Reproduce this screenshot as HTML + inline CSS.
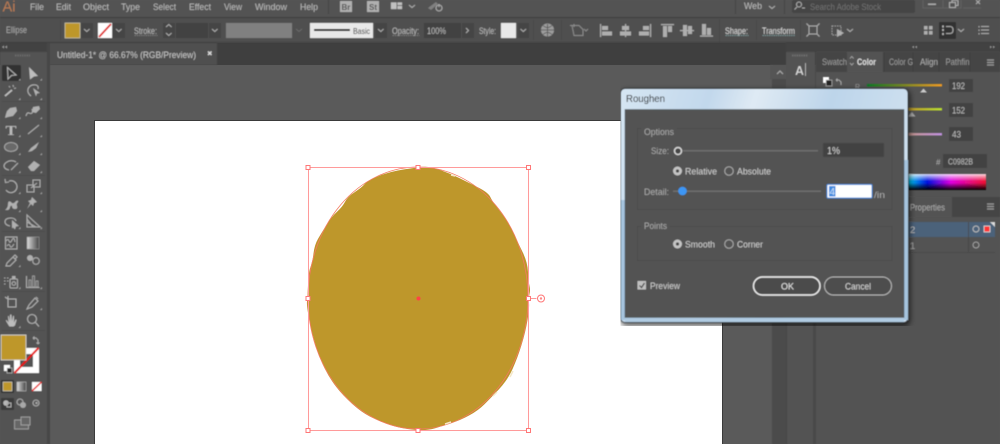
<!DOCTYPE html>
<html><head><meta charset="utf-8"><style>
html,body{margin:0;padding:0;width:1000px;height:444px;overflow:hidden;background:#535353}
svg{display:block}
text{font-family:"Liberation Sans",sans-serif;font-size:9.5px;fill:#bcbcbc}
.d{fill:#ababab;font-size:9.5px}
.i{fill:none;stroke:#ababab;stroke-width:1.1}
.f{fill:#b0b0b0;stroke:none}
.c{fill:none;stroke:#b0b0b0;stroke-width:1.1}
.s{fill:#444}
.h{fill:#fff;stroke:#f77;stroke-width:1}
</style></head><body>
<svg width="1000" height="444" viewBox="0 0 1000 444" xmlns="http://www.w3.org/2000/svg">
<defs>
<filter id="b" x="0" y="0" width="100%" height="100%"><feGaussianBlur stdDeviation="0.4"/></filter>
<filter id="sh" x="-10%" y="-10%" width="120%" height="120%"><feGaussianBlur stdDeviation="3"/></filter>
<linearGradient id="glass" x1="0" y1="0" x2="1" y2="0.25"><stop offset="0" stop-color="#d6e6f3"/><stop offset=".3" stop-color="#c2d8ec"/><stop offset=".45" stop-color="#dfeaf4"/><stop offset=".7" stop-color="#bdd5ea"/><stop offset="1" stop-color="#cfe1f0"/></linearGradient>
<linearGradient id="r" x1="0" x2="1"><stop offset="0" stop-color="#0c7a22"/><stop offset="1" stop-color="#f09a20"/></linearGradient>
<linearGradient id="g" x1="0" x2="1"><stop offset="0" stop-color="#c03c20"/><stop offset="1" stop-color="#b8e030"/></linearGradient>
<linearGradient id="bb" x1="0" x2="1"><stop offset="0" stop-color="#c09820"/><stop offset="1" stop-color="#c090e0"/></linearGradient>
<linearGradient id="spec" x1="0" x2="1"><stop offset="0" stop-color="#00d0f0"/><stop offset=".25" stop-color="#0010e0"/><stop offset=".55" stop-color="#e000e0"/><stop offset="1" stop-color="#f01030"/></linearGradient>
<linearGradient id="fade" x1="0" x2="0" y1="0" y2="1"><stop offset="0" stop-color="#fff" stop-opacity=".85"/><stop offset=".45" stop-color="#fff" stop-opacity="0"/><stop offset=".55" stop-color="#000" stop-opacity="0"/><stop offset="1" stop-color="#000"/></linearGradient>
<linearGradient id="gr" x1="0" x2="1"><stop offset="0" stop-color="#ddd"/><stop offset="1" stop-color="#444"/></linearGradient>
</defs>

<rect width="1000" height="444" fill="#535353"/>
<rect y="43" width="1000" height="22" fill="#3f3f3f"/>
<rect y="65" x="50" width="723" height="379" fill="#5a5a5a"/>
<rect x="95" y="121" width="627" height="323" fill="#fff"/>
<rect x="94" y="120" width="629" height="1" fill="#3a3a3a"/>
<rect x="94" y="120" width="1" height="324" fill="#3a3a3a"/>
<rect x="722" y="120" width="1" height="324" fill="#3a3a3a"/>

<g filter="url(#b)">
<rect x="772" y="65" width="14" height="379" fill="#4b4b4b"/>
<rect x="770" y="65" width="16" height="14" fill="#555"/>
<rect x="786" y="65" width="1.500" height="379" fill="#474747"/>
<rect x="787" y="65" width="27" height="379" fill="#525252"/>
<rect x="813" y="65" width="3" height="379" fill="#4a4a4a"/>
<rect x="816" y="52" width="184" height="392" fill="#535353"/>
<rect x="786" y="52" width="29" height="60" fill="#535353"/>
<rect x="786" y="43" width="214" height="9" fill="#434343"/>
<path d="M777 74l3-3 3 3" class="i"/>

<rect width="1000" height="17" fill="#535353"/>
<rect y="17" width="1000" height="1" fill="#3e3e3e"/>
<text x="2.500" y="11.500" style="font-size:15px;fill:#b97c52" textLength="13" lengthAdjust="spacingAndGlyphs">Ai</text>
<text x="30" y="10" textLength="14" lengthAdjust="spacingAndGlyphs">File</text>
<text x="56" y="10" textLength="15" lengthAdjust="spacingAndGlyphs">Edit</text>
<text x="83" y="10" textLength="26" lengthAdjust="spacingAndGlyphs">Object</text>
<text x="121" y="10" textLength="19" lengthAdjust="spacingAndGlyphs">Type</text>
<text x="153" y="10" textLength="23" lengthAdjust="spacingAndGlyphs">Select</text>
<text x="189" y="10" textLength="22" lengthAdjust="spacingAndGlyphs">Effect</text>
<text x="224" y="10" textLength="18" lengthAdjust="spacingAndGlyphs">View</text>
<text x="255" y="10" textLength="32" lengthAdjust="spacingAndGlyphs">Window</text>
<text x="300" y="10" textLength="18" lengthAdjust="spacingAndGlyphs">Help</text>
<rect x="328" y="0" width="1" height="14" fill="#464646"/>
<rect x="340" y="1" width="12" height="11" fill="#b0b0b0"/><text x="341.500" y="10" style="font-size:8px;fill:#555;font-weight:bold">Br</text>
<rect x="367" y="1" width="12" height="11" fill="#b0b0b0"/><text x="369" y="10" style="font-size:8px;fill:#555;font-weight:bold">St</text>
<path d="M390.500 2h12v7.500h-12zM397 2v7.500M397 5.500h6" fill="#c0c0c0" stroke="#535353" stroke-width=".8"/>
<path d="M409 5l3 2.500 3-2.500" class="i"/>
<path d="M428 8l8-6 2 2-7 6z" fill="#808080"/><circle cx="439" cy="8" r="3" class="i"/><path d="M439 4v3" class="i"/>
<rect x="735" y="0" width="1" height="14" fill="#464646"/><rect x="784" y="0" width="1" height="14" fill="#464646"/>
<text x="744" y="9" textLength="18" lengthAdjust="spacingAndGlyphs">Web</text>
<path d="M769 6l3 2.500 3-2.500" class="i"/>
<rect x="792" y="0" width="123" height="13" rx="2" fill="#444"/>
<circle cx="799" cy="4.500" r="2.500" class="i"/><path d="M797 7l-2.500 2.500M802 8h3" class="i"/>
<text x="810" y="10" style="fill:#727272" textLength="71" lengthAdjust="spacingAndGlyphs">Search Adobe Stock</text>
<path d="M923 0v8h20V0M943 8h18V0M963 8h18" fill="none" stroke="#666" stroke-width=".8"/>
<rect x="928" y="3.500" width="8" height="1.500" fill="#aaa"/>
<path d="M949.500 2.500h6v5h-6zM952 2.500v-2h6v5h-2.500" class="i" stroke-width=".9"/>
<path d="M976 0l4 4m0-4l-4 4" class="i"/>

<rect y="18" width="1000" height="25" fill="#505050"/>
<rect y="42" width="1000" height="1" fill="#3e3e3e"/>
<text x="6" y="33" class="d" textLength="21" lengthAdjust="spacingAndGlyphs">Ellipse</text>
<rect x="60" y="20" width="1" height="20" fill="#464646"/>
<rect x="65" y="23" width="15" height="15" fill="#be972b" stroke="#d8d8c8" stroke-width=".6"/>
<rect x="81" y="23" width="12" height="15" class="s"/><path d="M84 29l2.800 2.500 2.800-2.500" class="i"/>
<rect x="98" y="23" width="14" height="15" fill="#fff"/><path d="M99 37l12-13" stroke="#e01818" stroke-width="1.800"/>
<rect x="113" y="23" width="12" height="15" class="s"/><path d="M116 29l2.800 2.500 2.800-2.500" class="i"/>
<text x="134" y="34" textLength="23" lengthAdjust="spacingAndGlyphs">Stroke:</text><path d="M134.500 35.500h23" stroke="#888" stroke-width=".7" stroke-dasharray="1.500 .7"/>
<rect x="163" y="23" width="12" height="15" class="s"/><path d="M166 27l2.800-2.500 2.800 2.500M166 33l2.800 2.500 2.800-2.500" class="i"/>
<rect x="176" y="23" width="32" height="15" fill="#434343"/>
<rect x="209" y="23" width="12" height="15" class="s"/><path d="M212 29l2.800 2.500 2.800-2.500" class="i"/>
<rect x="226" y="23" width="66" height="15" fill="#808080"/>
<path d="M296 29l3 2.500 3-2.500" stroke="#6a6a6a" fill="none"/>
<rect x="310" y="23" width="63" height="15" fill="#e8e8e8"/><rect x="314" y="29" width="36" height="2" fill="#000"/>
<text x="353" y="34" style="fill:#222;font-size:8.500px" textLength="17" lengthAdjust="spacingAndGlyphs">Basic</text>
<rect x="375" y="23" width="12" height="15" class="s"/><path d="M378 29l2.800 2.500 2.800-2.500" class="i"/>
<text x="392" y="34" textLength="27" lengthAdjust="spacingAndGlyphs">Opacity:</text><path d="M392.500 35.500h27" stroke="#888" stroke-width=".7" stroke-dasharray="1.500 .7"/>
<rect x="424" y="23" width="37" height="15" fill="#434343"/><text x="427" y="34" textLength="19" lengthAdjust="spacingAndGlyphs">100%</text>
<rect x="462" y="23" width="12" height="15" class="s"/><path d="M466 28l2.500 2.500-2.500 2.500" class="i"/>
<text x="479" y="34" textLength="17" lengthAdjust="spacingAndGlyphs">Style:</text>
<rect x="501" y="23" width="15" height="15" fill="#e8e8e8"/>
<rect x="518" y="23" width="11" height="15" class="s"/><path d="M520.500 29l2.800 2.500 2.800-2.500" class="i"/>
<rect x="533" y="20" width="1" height="20" fill="#464646"/>
<circle cx="547.500" cy="30" r="6.500" fill="#9c9c9c"/><path d="M541 30h13M547.500 24v13M543 25.500q4.500 4 9 0M543 34.500q4.500-4 9 0" stroke="#535353" stroke-width=".8" fill="none"/>
<rect x="561" y="20" width="1" height="20" fill="#464646"/>
<path d="M572 25.500h7l4 4v6h-9zM570 25.500h3M574 24v3" fill="none" stroke="#8c8c8c" stroke-width="1"/><path d="M584 29l2 2 2-2" fill="none" stroke="#8c8c8c"/>
<g fill="#aeaeae">
<rect x="600" y="24" width="1.200" height="13"/><rect x="602" y="26" width="6" height="4"/><rect x="602" y="31.500" width="10" height="4"/>
<rect x="625" y="24" width="1.200" height="13"/><rect x="622" y="26" width="7" height="4"/><rect x="620" y="31.500" width="11" height="4"/>
<rect x="650" y="24" width="1.200" height="13"/><rect x="643" y="26" width="6" height="4"/><rect x="639" y="31.500" width="10" height="4"/>
<rect x="661" y="24" width="13" height="1.200"/><rect x="663" y="26" width="4" height="11"/><rect x="668" y="26" width="4" height="6"/>
<rect x="680" y="30" width="14" height="1.200"/><rect x="683" y="25" width="4" height="11"/><rect x="688" y="26" width="4" height="8"/>
<rect x="700" y="35.500" width="13" height="1.200"/><rect x="702" y="24" width="4" height="11"/><rect x="707" y="28" width="4" height="7"/>
</g>
<rect x="719" y="19" width="1" height="23" fill="#464646"/>
<text x="725" y="34" textLength="23" lengthAdjust="spacingAndGlyphs" style="fill:#dcdcdc">Shape:</text><path d="M725.500 35.500h23" stroke="#8aa" stroke-width=".7" stroke-dasharray="1.500 .7"/>
<rect x="756" y="20" width="1" height="20" fill="#464646"/>
<text x="762" y="34" textLength="33" lengthAdjust="spacingAndGlyphs" style="fill:#dcdcdc">Transform</text><path d="M762.500 35.500h33" stroke="#8aa" stroke-width=".7" stroke-dasharray="1.500 .7"/>
<rect x="800" y="20" width="1" height="20" fill="#464646"/>
<path d="M809 26h8v8h-8z" fill="none" stroke="#aaa"/><path d="M809 26l-2.500-2.500M817 26l2.500-2.500M809 34l-2.500 2.500M817 34l2.500 2.500" class="i"/>
<path d="M832 26h9v9h-9z" fill="none" stroke="#999" stroke-dasharray="1.500 1"/><path d="M837 29l7 4-7 4z" class="f"/><path d="M847 29l3 2.500 3-2.500" class="i"/>
<g fill="#aeaeae"><rect x="924" y="26" width="3.500" height="3.500"/><rect x="929" y="26" width="3.500" height="3.500"/><rect x="924" y="31" width="3.500" height="3.500"/><rect x="929" y="31" width="3.500" height="3.500"/></g>
<rect x="939" y="22" width="17" height="17" rx="1" fill="#303030"/>
<path d="M943 25.500v2M943 29v2M943 33v2" stroke="#c0c0c0" stroke-width="1.600"/><path d="M946 26.500h4q3 0 3 3.500t-3 3.500h-4" class="i"/>
<path d="M958 29l3 2.500 3-2.500" class="i"/>
<path d="M979 26v1.500M979 29.500v1.500M979 33v1.500" stroke="#aaa"/><path d="M981 26.500h8M981 30h8M981 33.500h8" stroke="#aaa"/>

<rect x="50" y="43" width="167" height="22" fill="#505050"/>
<text x="57" y="58" style="fill:#c8c8c8" textLength="139" lengthAdjust="spacingAndGlyphs">Untitled-1* @ 66.67% (RGB/Preview)</text>
<path d="M208 51.500l3.500 3.500m0-3.500l-3.500 3.500" stroke="#ddd" stroke-width="1.300"/>

<!-- tools -->
<rect x="0" y="43" width="47" height="9" fill="#434343"/>
<path d="M2 47l2-1.500v3zM5 47l2-1.500v3z" fill="#999"/>
<rect x="0" y="52" width="47" height="392" fill="#535353"/>
<rect x="47" y="52" width="1" height="392" fill="#3e3e3e"/>
<rect x="47" y="43" width="3" height="401" fill="#474747"/>
<path d="M15 55.500h15" stroke="#6a6a6a" stroke-dasharray="1.500 .8" stroke-width="2"/>
<rect x="2" y="65" width="19" height="16" rx="1.500" fill="#333"/>
<path d="M7.500 67.500l8.500 7.500-4.500.5-3.500 3.500z" class="c"/>
<path d="M29 67l9 9-4 .5-4 3z" fill="#bdbdbd"/>
<path d="M5 96l7-6" stroke="#c0c0c0" stroke-width="1.800"/><path d="M13 85l.5 2M16 88l-2 .5M9 86l1 1.500" class="i" stroke-width=".9"/>
<path d="M31 96q-4-3-3-7 2-5 8-4 3 1 2 4" class="c"/><path d="M33 88l7 5-3 .5-1 3z" class="f"/>
<path d="M10 108l6-1 1 4-4 5-5 1-3 1 1-4 1-3z" class="f"/>
<path d="M26 116q1-4 3-3t3 0 0-4" class="c"/><path d="M33 107l6-1 1 3-4 4-4-1z" class="f"/>
<text x="5.500" y="135" style="font-family:'Liberation Serif',serif;font-size:14px;font-weight:bold;fill:#bcbcbc" textLength="11" lengthAdjust="spacingAndGlyphs">T</text>
<path d="M28 134l11-9" class="c"/>
<ellipse cx="11" cy="147" rx="6.500" ry="4.500" fill="#696969" stroke="#a8a8a8" stroke-width="1"/>
<path d="M28 152l3-4 8-6-3 6-4 3z" class="f"/>
<path d="M16 162q-3-2-7-1-5 2-5 5t5 4" class="c"/><path d="M11 170l7-7" class="c" stroke-width="1.800"/>
<path d="M28 167l6-6 6 4-6 6-3 0z" class="f"/>
<path d="M9 181a6 6 0 1 1-3 9" class="c"/><path d="M5 179l.5 3.500 3.500-.5" class="i"/>
<path d="M27 185h7v7h-7zM33 180h7v7h-7z" class="i"/><path d="M31 188l6-5" class="i"/>
<path d="M5 210q3-2 3-6t3-2q2 3 5-1 3-1 2 1-2 2-1 4 1 3-2 3-3 0-3-3-1-1-2 1 0 2-2 3z" class="f"/>
<path d="M32 197l5 5-3 1-1 3-2-2-4 5 3-6-2-2 3-1z" class="f"/>
<path d="M5 222q0-4 6-4 4 0 5 3M5 222q0 3 5 4" class="c"/><path d="M12 220l7 6-3 .5-1 3-2-2-1 1z" class="f"/>
<path d="M27 215v12h13zM27 219l6 8M27 222l9 5" class="i" stroke-width=".8"/>
<rect x="5.500" y="237" width="11.500" height="12" class="i"/><path d="M6 241q2-3 3 0t3-1 3 2M7 246q2-3 3 0t4-2" class="i" stroke-width=".8"/>
<rect x="27" y="237" width="12" height="12" fill="url(#gr)" stroke="#999" stroke-width=".6"/>
<path d="M6 266l1-3 6-6 3 3-6 6zM13 257l2-2 2 2-2 2" class="c"/>
<circle cx="30" cy="258" r="3" class="f"/><circle cx="36" cy="261" r="3.300" class="i"/>
<path d="M4 278h1.500M7 278h1.500M4 281h1.500M7 281h1.500M4 284h1.500" stroke="#a8a8a8"/>
<rect x="10" y="279" width="7.500" height="9" rx="1" class="i"/><rect x="12" y="276" width="3.500" height="2.500" class="f"/><circle cx="13.800" cy="283.500" r="1.800" class="i"/>
<path d="M26.500 276v11.500h13" class="i"/><rect x="29" y="280" width="2" height="7" fill="none" stroke="#a8a8a8" stroke-width=".8"/><rect x="32.500" y="276" width="2" height="11" fill="none" stroke="#a8a8a8" stroke-width=".8"/><rect x="36" y="281" width="2" height="6" fill="none" stroke="#a8a8a8" stroke-width=".8"/>
<path d="M8 299h8v8h-8zM5 297l3 2M8 296v3" class="c"/>
<path d="M27 309l2-4 6-7 3 3-6 6z" class="c"/><path d="M36 297l2 2" class="i"/>
<path d="M9 326l-3-5q-.5-2 1.500 0l1 1.500-.5-6q0-1.500 1 0l1 4.500 0-6q1-1.500 1.500 0l.5 6 1-5q1-1 1 .5v6l1.500-3q1-.5 1 1l-1.500 5-1.500 1h-4z" fill="#bcbcbc"/>
<circle cx="32" cy="319" r="4.500" class="c"/><path d="M35.500 322.500l3.500 4" class="c" stroke-width="1.500"/>
<g fill="#a0a0a0"><path d="M20.500 80.500v-2l-2 2zM42 80.500v-2l-2 2zM20.500 100v-2l-2 2zM42 100v-2l-2 2zM20.500 119v-2l-2 2zM42 119v-2l-2 2zM20.500 137v-2l-2 2zM42 137v-2l-2 2zM20.500 155v-2l-2 2zM42 155v-2l-2 2zM20.500 173v-2l-2 2zM42 173v-2l-2 2zM20.500 194v-2l-2 2zM42 194v-2l-2 2zM20.500 212v-2l-2 2zM42 212v-2l-2 2zM20.500 229v-2l-2 2zM42 229v-2l-2 2zM20.500 267v-2l-2 2zM20.500 289v-2l-2 2zM42 289v-2l-2 2zM42 310v-2l-2 2zM20.500 328v-2l-2 2z"/></g>
<rect x="2" y="101" width="43" height=".8" fill="#4c4c4c"/><rect x="2" y="175" width="43" height=".8" fill="#4c4c4c"/><rect x="2" y="231" width="43" height=".8" fill="#4c4c4c"/><rect x="2" y="291" width="43" height=".8" fill="#4c4c4c"/><rect x="2" y="330" width="43" height=".8" fill="#4c4c4c"/>
<rect x="14" y="348" width="25" height="25" fill="#fff"/>
<rect x="20" y="354" width="13" height="13" fill="#535353"/>
<path d="M14.500 373l24-25" stroke="#e81818" stroke-width="2"/>
<rect x="1" y="335" width="25" height="25" fill="#be972b" stroke="#ddd" stroke-width=".8"/>
<path d="M33 338h3l2 2v4M33 338l1.500-1.500M33 338l1.500 1.500M38 344l-1.500-1.500M38 344l1.500-1.500" class="i" stroke-width="1"/>
<rect x="4" y="365" width="6" height="6" fill="#fff"/><rect x="7" y="368" width="5" height="5" fill="#222" stroke="#ddd" stroke-width=".6"/>
<rect x="1" y="380" width="13" height="13" rx="1" fill="#333"/>
<rect x="3" y="382" width="9" height="9" fill="#be972b" stroke="#ddd" stroke-width=".6"/>
<rect x="17" y="382" width="9" height="9" fill="url(#gr)" stroke="#bbb" stroke-width=".6"/>
<rect x="32" y="382" width="9.500" height="9" fill="#fff"/><path d="M32 391l9.500-9" stroke="#e81818" stroke-width="1.500"/>
<rect x="1" y="398" width="13" height="12" rx="1" fill="#3a3a3a"/>
<circle cx="6" cy="403" r="2.800" fill="#b8b8b8"/><rect x="7" y="403" width="4" height="4" class="i" stroke-width=".8"/>
<circle cx="20" cy="402" r="3" class="i" stroke-width=".8"/><circle cx="23" cy="405" r="3" fill="#a8a8a8"/>
<circle cx="36" cy="403" r="3" class="i" stroke-width=".8"/><rect x="35.500" y="402" width="2" height="2" fill="#a8a8a8"/>
<rect x="14.500" y="420" width="14" height="9" fill="#666" stroke="#aaa" stroke-width=".8"/><rect x="21" y="417" width="9" height="8" fill="#666" stroke="#aaa" stroke-width=".8"/>
</g>

<!-- artwork -->
<path d="M405 169.700Q420 167.500 425 167.200Q430 167 440 170.500Q450 174 459 178.500Q468 183 478 188Q488 193 490 197.500Q492 202 500 212Q508 222 512.500 232Q517 242 522 252Q527 262 527.500 272Q528 282 529 286Q530 290 529 294Q528 298 528.500 303Q529 308 527 320Q525 332 521 345Q517 358 512 369Q507 380 498.500 389Q490 398 484 404Q478 410 469 415Q460 420 451.500 422.500Q443 425 437.500 427Q432 429 425 429.500Q418 430 407.500 428.500Q397 427 387.500 423.500Q378 420 370 416Q362 412 352.500 403.500Q343 395 336.500 386.500Q330 378 325 368Q320 358 316 345Q312 332 309.500 318.500Q307 305 307.500 301.500Q308 298 308.500 285Q309 272 311 267Q313 262 314 253.500Q315 245 318.500 239Q322 233 327 225Q332 217 337.500 212Q343 207 345.500 202Q348 197 355 192.500Q362 188 365 184.500Q368 181 379 176.500Q390 172 405 169.700Z" fill="#be972b" stroke="#be972b" stroke-width="1"/>
<ellipse cx="418" cy="298" rx="110" ry="131" fill="none" stroke="#f47a60" stroke-width=".8"/>
<path d="M451 175l4 1M510 377l3-6M493 396l4-4M445 424l6-2" stroke="#f4e8c8" stroke-width="1.500" fill="none"/>
<path d="M308.500 167.500h220v263h-220z" fill="none" stroke="#ff9a9a" stroke-width="1"/>
<path d="M528.500 298.500h8" stroke="#ff9a9a"/>
<circle cx="541" cy="298.500" r="3.500" fill="#fff" stroke="#f77"/><circle cx="541" cy="298.500" r="1.200" fill="#f88"/>
<rect x="306" y="165.500" width="4" height="4" class="h"/><rect x="416" y="165.500" width="4" height="4" class="h"/><rect x="526.500" y="165.500" width="4" height="4" class="h"/>
<rect x="306" y="296.500" width="4" height="4" class="h"/><rect x="526.500" y="296.500" width="4" height="4" class="h"/>
<rect x="306" y="428.500" width="4" height="4" class="h"/><rect x="416" y="428.500" width="4" height="4" class="h"/><rect x="526.500" y="428.500" width="4" height="4" class="h"/>
<circle cx="418.500" cy="298.500" r="2" fill="#f44"/>

<g filter="url(#b)">
<path d="M912 47l2-1.500v3zM915 47l2-1.500v3zM990 45.500l2 1.500-2 1.500zM993 45.500l2 1.500-2 1.500z" fill="#999"/>
<path d="M792 55.500h16" stroke="#707070" stroke-width="2" stroke-dasharray="1.500 .8"/>
<text x="795" y="75" style="font-size:13px;fill:#d4d4d4;font-weight:bold" textLength="9" lengthAdjust="spacingAndGlyphs">A</text><rect x="805" y="63" width="1" height="13" fill="#bbb"/>
<rect x="816" y="52" width="184" height="20" fill="#454545"/>
<rect x="847" y="52" width="36" height="20" fill="#535353"/>
<text x="822" y="65" style="fill:#9c9c9c" textLength="25" lengthAdjust="spacingAndGlyphs">Swatch</text>
<path d="M850 58.500l1.800-2 1.800 2M850 63l1.800 2 1.800-2" fill="none" stroke="#aaa" stroke-width=".8"/>
<text x="857" y="65" style="fill:#e0e0e0;font-weight:bold" textLength="19" lengthAdjust="spacingAndGlyphs">Color</text>
<text x="889" y="65" style="fill:#9c9c9c" textLength="24" lengthAdjust="spacingAndGlyphs">Color G</text>
<text x="920" y="65" style="fill:#aeaeae" textLength="18" lengthAdjust="spacingAndGlyphs">Align</text>
<text x="945.500" y="65" style="fill:#9c9c9c" textLength="24" lengthAdjust="spacingAndGlyphs">Pathfin</text>
<path d="M884 52v20M913 52v20M939 52v20M970 52v20" stroke="#3f3f3f" stroke-width=".7"/>
<path d="M987 60h7M987 62.500h7M987 65h7" stroke="#999" stroke-width="1.200"/>
<rect x="823" y="77" width="6" height="6" fill="#fff"/><rect x="826" y="80" width="6" height="6" fill="#222" stroke="#ccc" stroke-width=".6"/>
<path d="M836 80h3l2 2v3M836 80l1.500-1.500M836 80l1.500 1.500" class="i" stroke-width=".8"/>
<text x="855" y="89" style="font-size:7px;fill:#999">R</text>
<rect x="867" y="84" width="75" height="2.500" fill="url(#r)"/><path d="M920 92.500l3.500-4 3.500 4z" fill="#ccc"/>
<rect x="949" y="79" width="24" height="13" rx="1" fill="#434343"/><text x="952" y="89" textLength="13" lengthAdjust="spacingAndGlyphs">192</text>
<rect x="867" y="108" width="75" height="2.500" fill="url(#g)"/><path d="M908 116.500l4-4.500 3.500 4.500z" fill="#aaa"/>
<rect x="949" y="103" width="24" height="14" rx="1" fill="#434343"/><text x="952" y="113.500" textLength="13" lengthAdjust="spacingAndGlyphs">152</text>
<rect x="867" y="133" width="75" height="2.500" fill="url(#bb)"/>
<rect x="949" y="127" width="24" height="14" rx="1" fill="#434343"/><text x="952" y="137.500" textLength="9" lengthAdjust="spacingAndGlyphs">43</text>
<text x="936" y="165" style="fill:#bbb;font-size:8px">#</text>
<rect x="943" y="154" width="44" height="14" rx="1" fill="#434343"/><text x="948" y="164.500" style="font-size:8.500px" textLength="25" lengthAdjust="spacingAndGlyphs">C0982B</text>
<rect x="908" y="174" width="78" height="16" fill="url(#spec)"/><rect x="908" y="174" width="78" height="16" fill="url(#fade)"/>
<rect x="816" y="197" width="184" height="20" fill="#454545"/>
<rect x="905" y="197" width="47" height="20" fill="#535353"/>
<text x="910" y="210.500" style="fill:#aeaeae" textLength="35" lengthAdjust="spacingAndGlyphs">Properties</text>
<path d="M987 204h7M987 206.500h7M987 209h7" stroke="#999" stroke-width="1.200"/>
<rect x="816" y="222" width="179" height="15" fill="#4c627a"/>
<path d="M990 222h5v5z" fill="#ddd"/>
<text x="910" y="233" style="fill:#c0c0c0">2</text>
<text x="910" y="249" style="fill:#aeaeae">1</text>
<circle cx="976" cy="229" r="3" fill="none" stroke="#bbb"/><rect x="984" y="226" width="6" height="6" fill="#f33" stroke="#ddd" stroke-width=".8"/>
<circle cx="976" cy="245" r="3" fill="none" stroke="#aaa"/>
<path d="M968.500 222v30M816 252.500h179" stroke="#474747" stroke-width=".8"/>

<!-- dialog -->
<rect x="621" y="90" width="289" height="236" rx="5" fill="#000" opacity=".65" filter="url(#sh)"/>
<rect x="620.500" y="88.500" width="287.500" height="234" rx="4.500" fill="url(#glass)" stroke="#2e3236"/>
<rect x="621" y="200" width="4" height="120" fill="#a6c4de"/><rect x="904" y="160" width="4" height="160" fill="#a6c4de"/>
<rect x="625" y="318" width="279" height="4" fill="#b0cbe2"/>
<text x="626" y="102" style="fill:#202020;font-size:10px" textLength="39" lengthAdjust="spacingAndGlyphs">Roughen</text>
<rect x="625" y="109.500" width="279" height="208" fill="#535353" stroke="#46525c" stroke-width=".5"/>
<rect x="637.500" y="128.500" width="254.500" height="81" fill="none" stroke="#4b4b4b" stroke-width=".8"/>
<rect x="641" y="125" width="36" height="8" fill="#535353"/>
<text x="644" y="135" class="d" textLength="30" lengthAdjust="spacingAndGlyphs">Options</text>
<rect x="637.500" y="226.500" width="254.500" height="34" fill="none" stroke="#4b4b4b" stroke-width=".8"/>
<rect x="641" y="222" width="29" height="8" fill="#535353"/>
<text x="644" y="229" class="d" textLength="23" lengthAdjust="spacingAndGlyphs">Points</text>
<text x="651" y="154" class="d" textLength="18" lengthAdjust="spacingAndGlyphs">Size:</text>
<rect x="683" y="150" width="135" height="1.500" fill="#6e6e6e"/>
<circle cx="678" cy="151" r="3.500" fill="#444" stroke="#d8d8d8" stroke-width="1.500"/>
<rect x="823" y="143" width="61" height="14" rx="1" fill="#424242"/>
<text x="827" y="154" style="font-size:10px;fill:#d4d4d4" textLength="13" lengthAdjust="spacingAndGlyphs">1%</text>
<circle cx="677.500" cy="171" r="4.500" fill="#c4c4c4"/><circle cx="677.500" cy="171" r="1.600" fill="#444"/>
<text x="685" y="174.500" style="fill:#d0d0d0" textLength="32" lengthAdjust="spacingAndGlyphs">Relative</text>
<circle cx="729" cy="171" r="4.300" fill="none" stroke="#aaa"/>
<text x="737" y="174.500" style="fill:#d0d0d0" textLength="34" lengthAdjust="spacingAndGlyphs">Absolute</text>
<text x="644" y="195" class="d" textLength="25" lengthAdjust="spacingAndGlyphs">Detail:</text>
<rect x="673" y="190.500" width="148" height="1.500" fill="#6e6e6e"/>
<circle cx="682.500" cy="191" r="4.300" fill="#3d96f4"/>
<rect x="827" y="184.500" width="45" height="13.500" rx="1" fill="#fff" stroke="#4a8fe0" stroke-width="1"/>
<rect x="829" y="186" width="6.500" height="10.500" fill="#3f8ae0"/>
<text x="829.500" y="195" style="fill:#cfe4fa;font-size:10px">4</text>
<text x="874" y="198" class="d" textLength="11" lengthAdjust="spacingAndGlyphs">/in</text>
<circle cx="677.500" cy="244" r="4.500" fill="#c4c4c4"/><circle cx="677.500" cy="244" r="1.600" fill="#444"/>
<text x="685" y="247.500" style="fill:#d0d0d0" textLength="30" lengthAdjust="spacingAndGlyphs">Smooth</text>
<circle cx="729" cy="244" r="4.300" fill="none" stroke="#aaa"/>
<text x="737" y="247.500" style="fill:#d0d0d0" textLength="26" lengthAdjust="spacingAndGlyphs">Corner</text>
<rect x="637.500" y="281" width="8.500" height="8.500" fill="#c0c0c0"/><path d="M639.500 285.500l2 2 3-4.500" fill="none" stroke="#444" stroke-width="1.200"/>
<text x="650" y="289" style="fill:#d0d0d0" textLength="30" lengthAdjust="spacingAndGlyphs">Preview</text>
<rect x="753.500" y="277" width="66.500" height="18" rx="9" fill="#4c4c4c" stroke="#f0f0f0" stroke-width="1.400"/>
<text x="781" y="289.500" style="fill:#e8e8e8" textLength="13" lengthAdjust="spacingAndGlyphs">OK</text>
<rect x="824.500" y="277" width="67" height="18" rx="9" fill="#4e4e4e" stroke="#b8b8b8" stroke-width="1"/>
<text x="845" y="289.500" style="fill:#d8d8d8" textLength="26" lengthAdjust="spacingAndGlyphs">Cancel</text>
</g>
</svg>
</body></html>
